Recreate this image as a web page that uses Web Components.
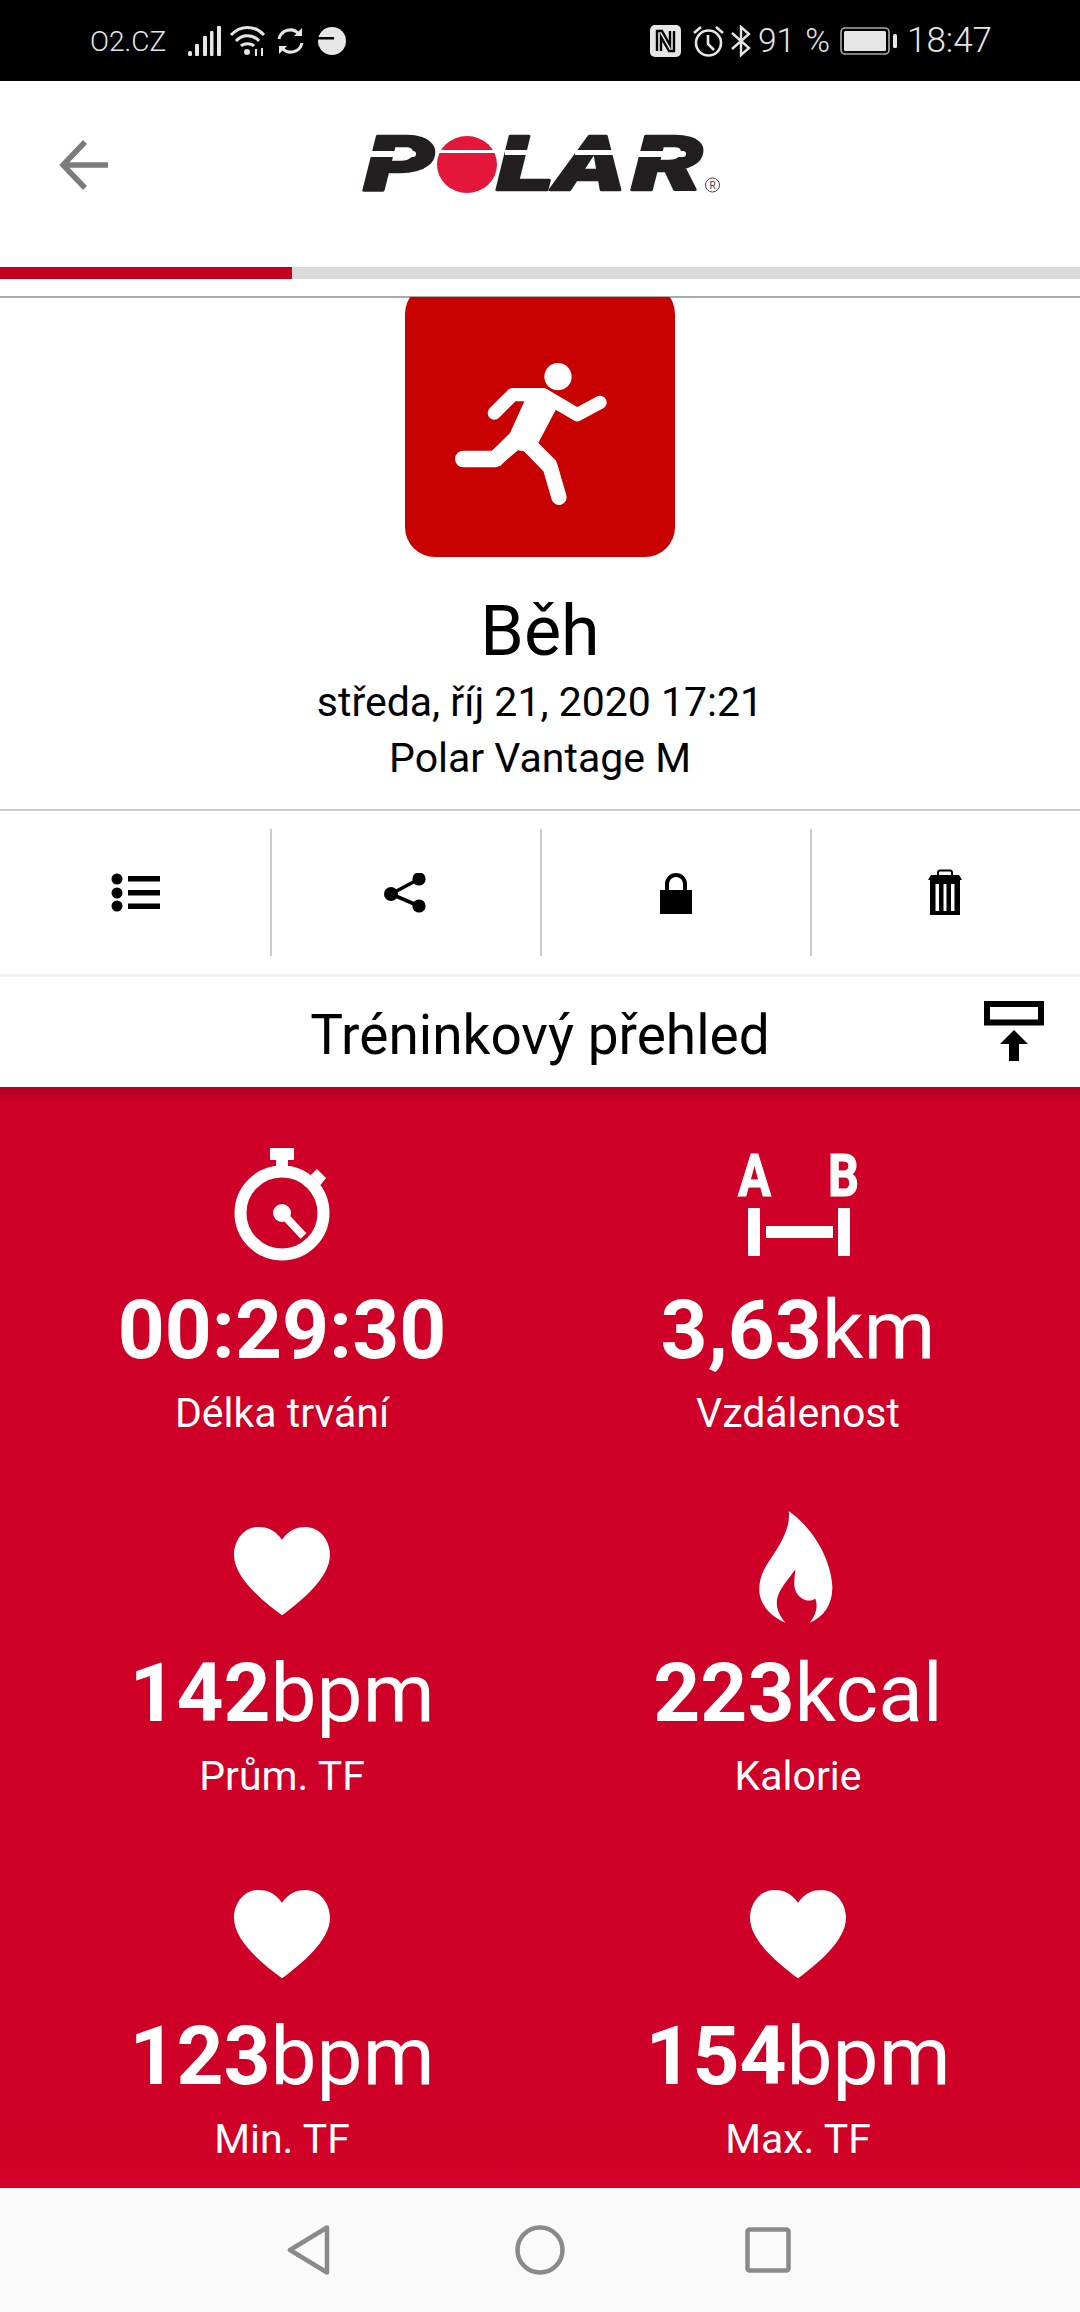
<!DOCTYPE html>
<html lang="cs">
<head>
<meta charset="utf-8">
<title>Polar Flow</title>
<style>
  html, body { margin: 0; padding: 0; background: #fff; }
  body { width: 1080px; height: 2312px; overflow: hidden; font-family: Roboto, "Liberation Sans", sans-serif; display: flex; flex-direction: column; }
</style>
</head>
<body>
<status-bar></status-bar>
<app-header></app-header>
<progress-line value="27"></progress-line>
<activity-head>
  <span slot="title">Běh</span>
  <span slot="date">středa, říj 21, 2020 17:21</span>
  <span slot="device">Polar Vantage M</span>
</activity-head>
<action-row></action-row>
<section-title>Tréninkový přehled</section-title>
<metric-grid>
  <metric-tile label="Délka trvání" value="00:29:30" icon="watch"></metric-tile>
  <metric-tile label="Vzdálenost" value="3,63" unit="km" icon="distance"></metric-tile>
  <metric-tile label="Prům. TF" value="142" unit="bpm" icon="heart"></metric-tile>
  <metric-tile label="Kalorie" value="223" unit="kcal" icon="flame"></metric-tile>
  <metric-tile label="Min. TF" value="123" unit="bpm" icon="heart"></metric-tile>
  <metric-tile label="Max. TF" value="154" unit="bpm" icon="heart"></metric-tile>
</metric-grid>
<nav-bar></nav-bar>

<script>
const ICONS = {
  watch: `<svg width="130" height="130" viewBox="0 0 130 130" fill="#fff">
    <rect x="53" y="1" width="24" height="12"/><rect x="59" y="12" width="12" height="10"/>
    <path d="M100 22 L109 31 L103.5 38 L93.7 28 Z"/>
    <circle cx="65" cy="66" r="41.5" fill="none" stroke="#fff" stroke-width="12"/>
    <circle cx="65" cy="66" r="9"/>
    <path d="M65 66 L86.5 89" stroke="#fff" stroke-width="8" fill="none"/>
  </svg>`,
  distance: `<svg width="150" height="142" viewBox="-10 -12 150 142" fill="#fff" stroke="#fff" style="margin-top:-12px">
    <text x="5" y="49" font-family="Roboto, sans-serif" font-weight="700" font-size="59" stroke-width="1.2" textLength="33" lengthAdjust="spacingAndGlyphs">A</text>
    <text x="95" y="49" font-family="Roboto, sans-serif" font-weight="700" font-size="59" stroke-width="1.2" textLength="31" lengthAdjust="spacingAndGlyphs">B</text>
    <g stroke="none">
      <rect x="15" y="61" width="12" height="48"/><rect x="105" y="61" width="12" height="48"/>
      <rect x="33" y="79" width="67" height="12"/>
    </g>
  </svg>`,
  heart: `<svg width="130" height="130" viewBox="-9 6 390 390" fill="#fff">
    <path d="M186 95 C165 65 140 57 115 57 C70 57 42 100 42 140 C42 210 130 280 186 322 C242 280 330 210 330 140 C330 100 302 57 257 57 C232 57 207 65 186 95 Z"/>
  </svg>`,
  flame: `<svg width="130" height="130" viewBox="-4 0 390 390" fill="#fff">
    <path d="M163 3 C170 50 140 100 110 145 C85 180 73 210 75 245 C78 285 110 320 153 338 C130 310 123 285 130 260 C140 230 165 205 183 178 C180 210 177 230 185 245 C195 265 220 280 243 266 C252 290 245 315 226 338 C270 320 295 280 294 230 C292 160 245 60 163 3 Z"/>
  </svg>`
};

class StatusBar extends HTMLElement {
  constructor() {
    super();
    this.attachShadow({ mode: 'open' });
  }

  connectedCallback() {
    this.shadowRoot.innerHTML = `
      <style>
        :host { display: flex; align-items: center; justify-content: space-between; height: 81px; flex: none; background: #000; color: #e6e6e6; padding: 0 88px 0 90px; box-sizing: border-box; font-family: Roboto, sans-serif; }
        .group { display: flex; align-items: center; }
        .carrier { font-size: 28px; font-weight: 300; margin-top: 2px; margin-right: 22px; }
        .pct { font-size: 33.5px; font-weight: 300; margin: 0 10px 0 7px; word-spacing: 2px; }
        .time { font-size: 35px; font-weight: 300; margin-left: 9px; }
        svg { display: block; }
      </style>
      <div class="group">
        <span class="carrier">O2.CZ</span>
        <svg width="34" height="32" viewBox="0 0 34 32" fill="#e6e6e6" style="margin-right:7px">
          <rect x="0" y="26" width="4" height="5" rx="1.5"/><rect x="7" y="19" width="4" height="12" rx="1"/>
          <rect x="15" y="11" width="4" height="20" rx="1"/><rect x="22" y="6" width="3.5" height="25" rx="1"/><rect x="29" y="1" width="4" height="30" rx="1"/>
        </svg>
        <svg width="38" height="32" viewBox="0 0 38 32" fill="none" stroke="#e6e6e6" stroke-width="3" style="margin-right:10px">
          <path d="M2 10 C11 0 26 0 35 10"/><path d="M7 16 C13 9 24 9 30 16"/><path d="M12 21 C15 18 22 18 25 21"/>
          <circle cx="18" cy="27" r="3" fill="#e6e6e6" stroke="none"/>
          <path d="M27 31 V24 M33 23 V31" stroke-width="2"/>
        </svg>
        <svg width="27" height="28" viewBox="0 0 27 28" fill="none" stroke="#e6e6e6" stroke-width="3" style="margin-right:14px">
          <path d="M2 12 A11.5 11.5 0 0 1 22 7"/><path d="M25 16 A11.5 11.5 0 0 1 5 21"/>
          <path d="M25 1 V9 H17 Z M2 27 V19 H10 Z" fill="#e6e6e6" stroke="none"/>
        </svg>
        <svg width="28" height="28" viewBox="0 0 28 28">
          <circle cx="14" cy="14" r="14" fill="#e6e6e6"/><rect x="0" y="10" width="16" height="2.5" fill="#000"/>
        </svg>
      </div>
      <div class="group">
        <svg width="31" height="32" viewBox="0 0 31 32" style="margin-right:12px">
          <rect width="31" height="32" rx="5" fill="#e6e6e6"/>
          <path d="M7 26 V6 H12 L20 20 V6 M24 6 V26 H19 L11 12 V26" fill="none" stroke="#000" stroke-width="2.4"/>
        </svg>
        <svg width="31" height="32" viewBox="0 0 31 32" fill="none" stroke="#e6e6e6" stroke-width="2.6" style="margin-right:7px">
          <circle cx="15.5" cy="18" r="12.5"/><path d="M15 10 V19 L21 25"/><path d="M1 8 L8 2 M30 8 L23 2"/>
        </svg>
        <svg width="20" height="32" viewBox="0 0 20 32" fill="none" stroke="#e6e6e6" stroke-width="2.4">
          <path d="M1 8 L18 23 L10 30 V2 L18 9 L1 24"/>
        </svg>
        <span class="pct">91 %</span>
        <svg width="58" height="28" viewBox="0 0 58 28">
          <rect x="1" y="1" width="48" height="26" rx="4" fill="none" stroke="#aaa" stroke-width="1.6"/>
          <rect x="4" y="4" width="42" height="20" rx="1.5" fill="#e6e6e6"/>
          <rect x="53" y="7" width="4" height="14" rx="1.5" fill="#e6e6e6"/>
        </svg>
        <span class="time">18:47</span>
      </div>`;
  }
}

class AppHeader extends HTMLElement {
  constructor() {
    super();
    this.attachShadow({ mode: 'open' });
  }

  connectedCallback() {
    // logo letters stay real text, the white cuts and the red ball are laid over them
    this.shadowRoot.innerHTML = `
      <style>
        :host { display: grid; grid-template-columns: 1fr auto 1fr; align-items: center; height: 186px; flex: none; background: #fff; box-sizing: border-box; padding-bottom: 18px; }
        .back { padding-left: 59px; }
        svg { display: block; }
        .logo { grid-column: 2; margin-left: 1px; }
        .logo text { font-family: Roboto, sans-serif; font-weight: 900; font-style: italic; fill: #231f20; stroke: #231f20; stroke-width: 2.5; stroke-linejoin: round; }
      </style>
      <div class="back">
        <svg width="50" height="50" viewBox="0 0 50 50" fill="none" stroke="#7c7c7c" stroke-width="5.5">
          <path d="M26 2 L4 25 L26 48 M4 25 H49" stroke-linejoin="miter"/>
        </svg>
      </div>
      <svg class="logo" width="360" height="110" viewBox="361 110 360 110">
        <text x="364" y="190" font-size="75" textLength="70" lengthAdjust="spacingAndGlyphs">P</text>
        <text x="497" y="190" font-size="75" textLength="57" lengthAdjust="spacingAndGlyphs">L</text>
        <text x="556" y="190" font-size="75" textLength="69" lengthAdjust="spacingAndGlyphs">A</text>
        <text x="632" y="190" font-size="75" textLength="71" lengthAdjust="spacingAndGlyphs">R</text>
        <rect x="364" y="151" width="52" height="6" rx="3" fill="#fff"/>
        <rect x="636" y="151" width="50" height="6" rx="3" fill="#fff"/>
        <rect x="505" y="150" width="50" height="5" fill="#fff"/>
        <rect x="575" y="150" width="40" height="5" fill="#fff"/>
        <ellipse cx="467" cy="164.5" rx="30" ry="28.5" fill="#e4173a"/>
        <rect x="436" y="150" width="64" height="3" fill="#fff"/>
        <circle cx="712.5" cy="185" r="7" fill="none" stroke="#444" stroke-width="1"/>
        <text x="712.5" y="188.5" font-size="10" text-anchor="middle" style="font-weight:400;font-style:normal;stroke:none;fill:#444">R</text>
      </svg>`;
  }
}

class ProgressLine extends HTMLElement {
  constructor() {
    super();
    this.attachShadow({ mode: 'open' });
  }

  connectedCallback() {
    this.shadowRoot.innerHTML = `
      <style>
        :host { display: block; flex: none; height: 12px; background: #dadada; }
        div { height: 100%; background: #c2001f; }
      </style>
      <div style="width:${this.getAttribute('value')}%"></div>`;
  }
}

class ActivityHead extends HTMLElement {
  constructor() {
    super();
    this.attachShadow({ mode: 'open' });
  }

  connectedCallback() {
    this.shadowRoot.innerHTML = `
      <style>
        :host { display: flex; flex-direction: column; align-items: center; flex: none; box-sizing: border-box; margin-top: 17px; padding-bottom: 23px; border-top: 2px solid #aaa; border-bottom: 2px solid #ccc; color: #000; text-align: center; }
        .clip { width: 270px; height: 260px; overflow: hidden; flex: none; margin-top: -1px; }
        .tile { height: 273px; margin-top: -13px; background: #c80000; border-radius: 30px; overflow: hidden; }
        .tile svg { display: block; margin-top: 13px; }
        .tile::before { content: ''; display: block; height: 0.1px; }
        .title { font-size: 70px; line-height: 86px; margin-top: 31px; }
        .line { font-size: 41px; line-height: 56px; }
      </style>
      <div class="clip">
        <div class="tile">
          <svg width="270" height="260" viewBox="75 52 810 780" fill="#fff">
            <circle cx="534" cy="291" r="41"/>
            <path d="M343 400 L398 345 H490 L592 405 L660 368" fill="none" stroke="#fff" stroke-width="40" stroke-linecap="round" stroke-linejoin="round"/>
            <path d="M442 345 H500 L530 385 L475 490 L530 545 L490 575 L432 515 L405 510 L360 560 L335 515 L390 460 Z"/>
            <path d="M250 538 H345 L410 482" fill="none" stroke="#fff" stroke-width="50" stroke-linecap="round" stroke-linejoin="round"/>
            <path d="M445 495 L510 560 L537 653" fill="none" stroke="#fff" stroke-width="46" stroke-linecap="round" stroke-linejoin="round"/>
          </svg>
        </div>
      </div>
      <div class="title"><slot name="title"></slot></div>
      <div class="line"><slot name="date"></slot></div>
      <div class="line"><slot name="device"></slot></div>`;
  }
}

class ActionRow extends HTMLElement {
  constructor() {
    super();
    this.attachShadow({ mode: 'open' });
  }

  connectedCallback() {
    this.shadowRoot.innerHTML = `
      <style>
        :host { display: grid; grid-template-columns: 272px 270px 270px 268px; flex: none; height: 166px; box-sizing: border-box; padding: 18px 0; border-bottom: 3px solid #f0f0f0; }
        .cell { display: flex; justify-content: center; padding-top: 44px; box-sizing: border-box; border-right: 2px solid #ccc; }
        .cell:last-child { border-right: none; }
        svg { display: block; }
      </style>
      <div class="cell">
        <svg width="50" height="46" viewBox="0 0 50 46" style="margin-left:2px">
          <circle cx="6" cy="6" r="5.5"/><circle cx="6" cy="20" r="5.5"/><circle cx="6" cy="33" r="5.5"/>
          <rect x="17" y="3" width="32" height="5.5"/><rect x="17" y="17" width="32" height="5.5"/><rect x="17" y="30.5" width="32" height="5.5"/>
        </svg>
      </div>
      <div class="cell">
        <svg width="46" height="46" viewBox="0 0 46 46">
          <path d="M36 6 L8 21 L36 33" fill="none" stroke="#000" stroke-width="3.6"/>
          <circle cx="36" cy="6" r="6.6"/><circle cx="8" cy="21" r="7"/><circle cx="36" cy="33" r="6.6"/>
        </svg>
      </div>
      <div class="cell">
        <svg width="34" height="46" viewBox="0 0 34 46">
          <path d="M8 20 V11 A9 9 0 0 1 26 11 V20" fill="none" stroke="#000" stroke-width="4"/>
          <rect x="1" y="17" width="32" height="24"/>
        </svg>
      </div>
      <div class="cell">
        <svg width="36" height="48" viewBox="0 0 36 48" style="margin:-4px 3px 0 0">
          <path d="M11 7 V3 A2 2 0 0 1 13 1.5 H23 A2 2 0 0 1 25 3 V7" fill="none" stroke="#000" stroke-width="2"/>
          <path d="M4 6 H32 L35 11 H1 Z"/>
          <path d="M3 11 H33 V46 H3 Z M8.5 15 V42 H12 V15 Z M16.5 15 V42 H19.5 V15 Z M24 15 V42 H27.5 V15 Z" fill-rule="evenodd"/>
        </svg>
      </div>`;
  }
}

class SectionTitle extends HTMLElement {
  constructor() {
    super();
    this.attachShadow({ mode: 'open' });
  }

  connectedCallback() {
    this.shadowRoot.innerHTML = `
      <style>
        :host { display: grid; grid-template-columns: 1fr auto 1fr; align-items: center; flex: none; height: 110px; background: #fff; color: #000; font-size: 55px; }
        .text { grid-column: 2; margin-top: 6px; }
        .btn { justify-self: end; padding-right: 36px; }
        svg { display: block; }
      </style>
      <div class="text"><slot></slot></div>
      <div class="btn">
        <svg width="60" height="62" viewBox="0 0 60 62">
          <rect x="3" y="3" width="54" height="18.5" fill="none" stroke="#000" stroke-width="6"/>
          <path d="M30 29 L44 43 H35 V60 H25 V43 H16 Z"/>
        </svg>
      </div>`;
  }
}

class MetricGrid extends HTMLElement {
  constructor() {
    super();
    this.attachShadow({ mode: 'open' });
  }

  connectedCallback() {
    this.shadowRoot.innerHTML = `
      <style>
        :host { display: grid; grid-template-columns: 516px 516px; grid-auto-rows: 363px; flex: none; height: 1101px; box-sizing: border-box; padding: 60px 24px 0; color: #fff; overflow: hidden;
          background: linear-gradient(#b30024, #ce0027 16px, #ce0027 90%, #d30028); }
      </style>
      <slot></slot>`;
  }
}

class MetricTile extends HTMLElement {
  constructor() {
    super();
    this.attachShadow({ mode: 'open' });
  }

  connectedCallback() {
    const unit = this.getAttribute('unit') || '';
    this.shadowRoot.innerHTML = `
      <style>
        :host { display: flex; flex-direction: column; align-items: center; }
        .icon { height: 130px; flex: none; }
        .icon svg { display: block; }
        .value { font-size: 82px; line-height: 100px; font-weight: 700; margin-top: 3px; white-space: nowrap; }
        .unit { font-weight: 400; }
        .label { font-size: 41px; line-height: 50px; font-weight: 400; margin-top: 8px; }
      </style>
      <div class="icon">${ICONS[this.getAttribute('icon')]}</div>
      <div class="value">${this.getAttribute('value')}<span class="unit">${unit}</span></div>
      <div class="label">${this.getAttribute('label')}</div>`;
  }
}

class NavBar extends HTMLElement {
  constructor() {
    super();
    this.attachShadow({ mode: 'open' });
  }

  connectedCallback() {
    this.shadowRoot.innerHTML = `
      <style>
        :host { display: flex; flex: none; height: 124px; background: #fafafa; align-items: center; justify-content: center; gap: 184px; padding-right: 2px; box-sizing: border-box; }
        svg { display: block; fill: none; stroke: #8a8a8a; stroke-width: 4.5; stroke-linejoin: round; }
        .square { margin-left: -4px; }
      </style>
      <svg width="44" height="52" viewBox="0 0 44 52"><path d="M40 3.5 V48.5 L3 26 Z"/></svg>
      <svg width="50" height="50" viewBox="0 0 50 50"><circle cx="25" cy="25" r="22.5"/></svg>
      <svg class="square" width="46" height="46" viewBox="0 0 46 46"><rect x="2.5" y="2.5" width="41" height="41" rx="2"/></svg>`;
  }
}

customElements.define('status-bar', StatusBar);
customElements.define('app-header', AppHeader);
customElements.define('progress-line', ProgressLine);
customElements.define('activity-head', ActivityHead);
customElements.define('action-row', ActionRow);
customElements.define('section-title', SectionTitle);
customElements.define('metric-grid', MetricGrid);
customElements.define('metric-tile', MetricTile);
customElements.define('nav-bar', NavBar);
</script>
</body>
</html>
